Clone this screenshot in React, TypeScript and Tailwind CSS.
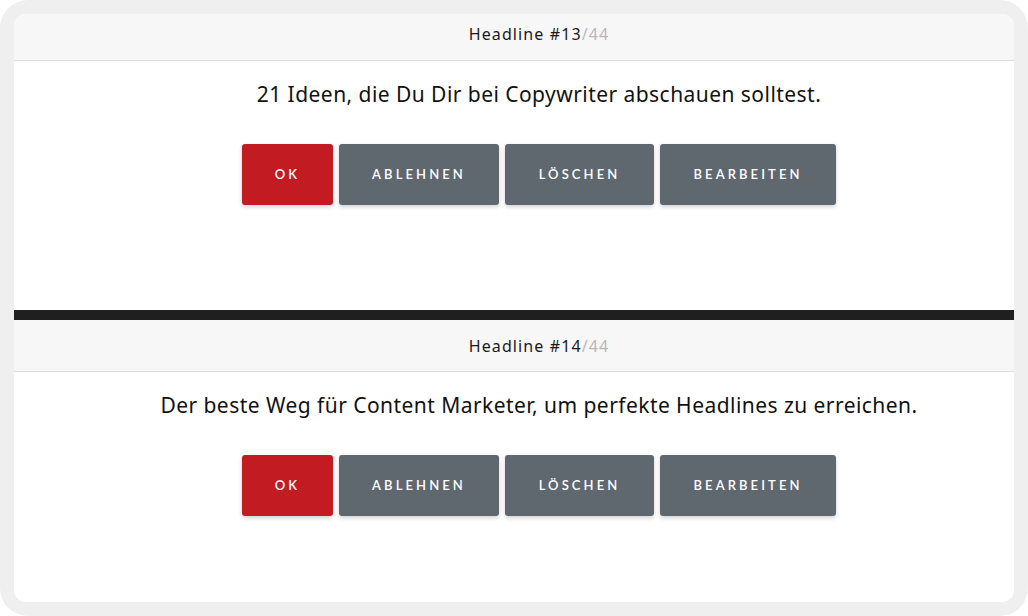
import React from "react";

const buttons = [
  { label: "OK", w: "w-[91px]", red: true },
  { label: "ABLEHNEN", w: "w-[160px]", red: false },
  { label: "LÖSCHEN", w: "w-[149px]", red: false },
  { label: "BEARBEITEN", w: "w-[176px]", red: false },
];

function Headline(props: { nr: number; total: number; text: string; headH: string; bodyH: string }) {
  return (
    <div className="flex flex-col">
      <div
        className={
          "flex items-center justify-center pl-[50px] bg-[#f7f7f7] border-b border-[#dcdcdc] text-[16px] tracking-[1.1px] text-[#1a1a1a] " +
          props.headH
        }
      >
        Headline #{props.nr}
        <span className="text-[#b8b8b8]">/{props.total}</span>
      </div>
      <div className={"flex flex-col items-center pl-[50px] pt-[19px] bg-white " + props.bodyH}>
        <p className="text-[21px] leading-[28px] tracking-[0.45px] text-[#111]">{props.text}</p>
        <div className="flex gap-[6px] mt-[36px]">
          {buttons.map((b) => (
            <button
              key={b.label}
              className={
                "h-[61px] rounded-[3px] text-white text-[13px] font-semibold tracking-[3.1px] shadow-[0_2px_4px_rgba(0,0,0,0.18)] " +
                b.w +
                (b.red ? " bg-[#c21b22]" : " bg-[#5f676f]")
              }
              style={{ fontFamily: "Lato, sans-serif" }}
            >
              {b.label}
            </button>
          ))}
        </div>
      </div>
    </div>
  );
}

export default function App() {
  return (
    <div className="w-[1028px] h-[616px] bg-white" style={{ fontFamily: "'Noto Sans', sans-serif" }}>
      <div className="w-full h-full bg-[#efefef] rounded-[28px] p-[14px]">
        <div className="w-full h-full bg-white rounded-[12px] overflow-hidden flex flex-col">
          <Headline
            nr={13}
            total={44}
            text="21 Ideen, die Du Dir bei Copywriter abschauen solltest."
            headH="h-[47px] pb-[6px]"
            bodyH="h-[249px]"
          />
          <div className="h-[10px] bg-[#1f1f1f] shrink-0" />
          <Headline
            nr={14}
            total={44}
            text="Der beste Weg für Content Marketer, um perfekte Headlines zu erreichen."
            headH="h-[52px]"
            bodyH="flex-1"
          />
        </div>
      </div>
    </div>
  );
}
